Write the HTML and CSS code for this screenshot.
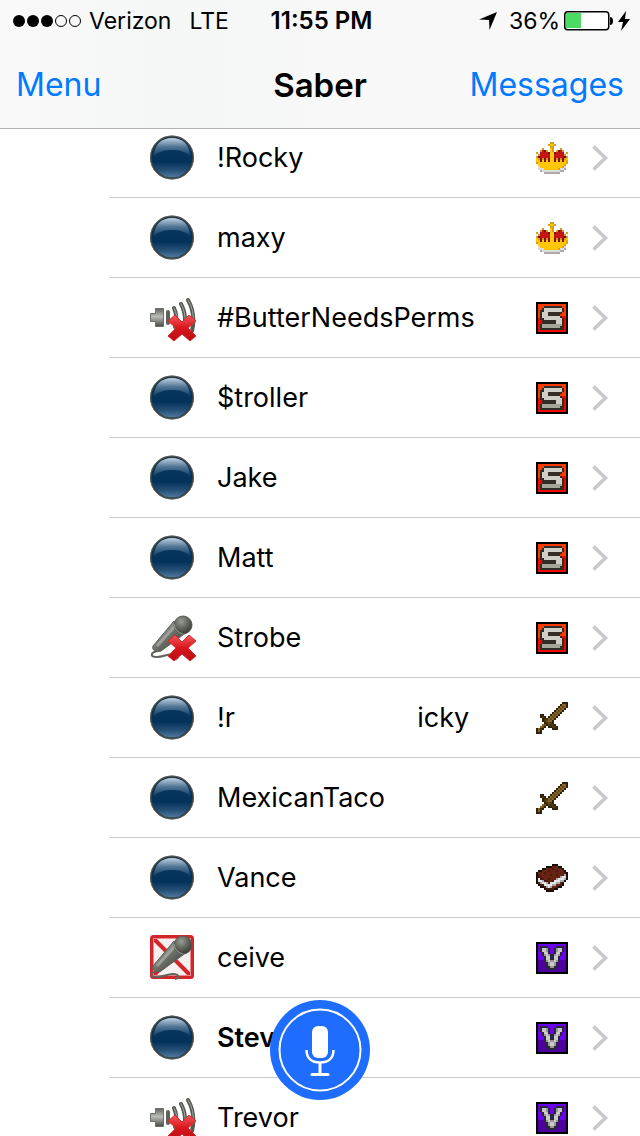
FILE: index.html
```html
<!DOCTYPE html>
<html lang="en">
<head>
  <meta charset="UTF-8">
  <meta name="viewport" content="width=device-width, initial-scale=1">
  <title>Saber</title>
  <link rel="stylesheet" href="styles.css">
</head>
<body>
  <svg class="defs" aria-hidden="true">
    <defs>
      <linearGradient id="orbFill" x1="0" y1="0" x2="0" y2="1">
        <stop offset="0" stop-color="#0b3a63"/>
        <stop offset="0.6" stop-color="#02315a"/>
        <stop offset="0.8" stop-color="#244f76"/>
        <stop offset="1" stop-color="#5580a6"/>
      </linearGradient>
      <linearGradient id="orbShine" x1="0" y1="0" x2="0" y2="1">
        <stop offset="0" stop-color="#c3d3e2"/>
        <stop offset="0.5" stop-color="#4f7394"/>
        <stop offset="1" stop-color="#123f68"/>
      </linearGradient>
      <linearGradient id="metal" x1="0" y1="0" x2="0" y2="1">
        <stop offset="0" stop-color="#60645f"/>
        <stop offset="0.45" stop-color="#b9bcb7"/>
        <stop offset="1" stop-color="#474b46"/>
      </linearGradient>
      <linearGradient id="crossFill" x1="0" y1="0" x2="0" y2="1">
        <stop offset="0" stop-color="#f25a5d"/>
        <stop offset="0.5" stop-color="#d9161c"/>
        <stop offset="1" stop-color="#b80d14"/>
      </linearGradient>
      <linearGradient id="micBody" x1="0" y1="0" x2="1" y2="1">
        <stop offset="0.2" stop-color="#a0a49d"/>
        <stop offset="0.5" stop-color="#6b6f67"/>
        <stop offset="0.8" stop-color="#40443d"/>
      </linearGradient>
      <radialGradient id="micHead" cx="0.4" cy="0.3" r="0.7">
        <stop offset="0" stop-color="#999d96"/>
        <stop offset="0.5" stop-color="#656961"/>
        <stop offset="1" stop-color="#3a3e37"/>
      </radialGradient>
    </defs>

    <symbol id="orb" viewBox="0 0 48 48">
      <circle cx="24" cy="23.500" r="21" fill="url(#orbFill)" stroke="#2f3836" stroke-width="2"/>
      <path d="M6 22C6 10 14 4 24 4s18 6 18 18c-5-5-11-6-18-6S11 17 6 22z" fill="url(#orbShine)"/>
      <circle cx="24" cy="23.500" r="21.500" fill="none" stroke="#777c72" stroke-width="1" opacity="0.6"/>
    </symbol>

    <symbol id="cross" viewBox="0 0 48 48">
      <path d="M27 21l7 7 7-7 7 6-8 7 8 8-6 5-8-7-8 7-6-5 8-8-8-7z" fill="url(#crossFill)" stroke="#d9292d" stroke-width="1" stroke-linejoin="round"/>
    </symbol>

    <symbol id="speaker" viewBox="0 0 48 48">
      <path d="M2.500 19.500h5v-5h8v18h-8v-5h-5z" fill="url(#metal)" stroke="#6b6f69"/>
      <path d="M20 18v11" fill="none" stroke="#5f635d" stroke-width="4" stroke-linecap="round"/>
      <path d="M26 14q4 8 1 19M33 10q6 11 3 24M40 6q8 14 4 31" fill="none" stroke="#555952" stroke-width="4" stroke-linecap="round"/>
      <path d="M26 14q4 7 2 15M33 10q5 9 4 18M40 6q7 11 5 24" fill="none" stroke="#a4a8a1" stroke-width="1" stroke-linecap="round"/>
    </symbol>

    <symbol id="mic" viewBox="0 0 48 48">
      <path d="M9 37c-7 2-7 6 0 6 6 0 10-3 16-3s7 4 2 5" fill="none" stroke="#5f635b" stroke-width="2"/>
      <path d="M5 32l21-25 13 11-26 19c-4 2-10-1-8-5z" fill="url(#micBody)" stroke="#5c6058" stroke-width="1"/>
      <path d="M9 32l18-20" stroke="#b6bab2" stroke-width="3" opacity="0.6"/>
      <circle cx="35" cy="11" r="9" fill="url(#micHead)" stroke="#575b53"/>
      <path d="M26 10q1 8 9 10" fill="none" stroke="#9da199" stroke-width="1"/>
    </symbol>

    <symbol id="micBlocked" viewBox="0 0 48 48">
      <rect x="3.500" y="2.500" width="41" height="41" rx="2" fill="#f4f0f0" stroke="#d3262b" stroke-width="3"/>
      <path d="M5 4l38 38M43 4L5 42" stroke="#d3262b" stroke-width="4"/>
      <rect x="5.500" y="4.500" width="37" height="37" fill="none" stroke="#e98a8c" stroke-width="1"/>
    </symbol>

    <symbol id="crown" viewBox="0 0 16 16"></symbol>
    <symbol id="staff" viewBox="0 0 16 16"></symbol>
    <symbol id="sword" viewBox="0 0 16 16"></symbol>
    <symbol id="book" viewBox="0 0 16 16"></symbol>
    <symbol id="vip" viewBox="0 0 16 16"></symbol>

    <symbol id="chevron" viewBox="0 0 16 26">
      <path d="M1.500 1.500L13.500 13 1.500 24.500" fill="none" stroke="#c7c7cc" stroke-width="3.500"/>
    </symbol>
  </svg>

  <header class="topbar">
    <div class="status">
      <div class="status-left">
        <svg class="signal" viewBox="0 0 68 12" aria-label="Signal 3 of 5">
          <circle cx="6" cy="6" r="6"/>
          <circle cx="20" cy="6" r="6"/>
          <circle cx="34" cy="6" r="6"/>
          <circle class="empty" cx="48" cy="6" r="5.500"/>
          <circle class="empty" cx="62" cy="6" r="5.500"/>
        </svg>
        <span>Verizon</span>
        <span class="network">LTE</span>
      </div>
      <div class="clock">11:55 PM</div>
      <div class="status-right">
        <svg class="location" viewBox="0 0 18 18"><path d="M18 0L10.500 18 10 8 0 7.500z"/></svg>
        <span>36%</span>
        <svg class="battery" viewBox="0 0 50 20">
          <rect x="0.750" y="0.750" width="44" height="18" rx="3" fill="#fff" stroke="#000" stroke-width="1.500"/>
          <rect x="2" y="2" width="15" height="15" fill="#4cd964"/>
          <path d="M46 6q3 0 3 4t-3 4z"/>
        </svg>
        <svg class="bolt" viewBox="0 0 12 20"><path d="M8 0L0 11h5L3 20l9-12H7z"/></svg>
      </div>
    </div>
    <nav class="navbar">
      <a href="#menu">Menu</a>
      <h1>Saber</h1>
      <a class="messages" href="#messages">Messages</a>
    </nav>
  </header>

  <main class="users">
    <a class="user" href="#rocky">
      <svg class="state"><use href="#orb"/></svg>
      <span class="name">!Rocky</span>
      <svg class="rank"><use href="#crown"/></svg>
      <svg class="chevron"><use href="#chevron"/></svg>
    </a>
    <a class="user" href="#maxy">
      <svg class="state"><use href="#orb"/></svg>
      <span class="name">maxy</span>
      <svg class="rank"><use href="#crown"/></svg>
      <svg class="chevron"><use href="#chevron"/></svg>
    </a>
    <a class="user" href="#butter">
      <svg class="state"><use href="#speaker"/><use href="#cross"/></svg>
      <span class="name">#ButterNeedsPerms</span>
      <svg class="rank"><use href="#staff"/></svg>
      <svg class="chevron"><use href="#chevron"/></svg>
    </a>
    <a class="user" href="#troller">
      <svg class="state"><use href="#orb"/></svg>
      <span class="name">$troller</span>
      <svg class="rank"><use href="#staff"/></svg>
      <svg class="chevron"><use href="#chevron"/></svg>
    </a>
    <a class="user" href="#jake">
      <svg class="state"><use href="#orb"/></svg>
      <span class="name">Jake</span>
      <svg class="rank"><use href="#staff"/></svg>
      <svg class="chevron"><use href="#chevron"/></svg>
    </a>
    <a class="user" href="#matt">
      <svg class="state"><use href="#orb"/></svg>
      <span class="name">Matt</span>
      <svg class="rank"><use href="#staff"/></svg>
      <svg class="chevron"><use href="#chevron"/></svg>
    </a>
    <a class="user" href="#strobe">
      <svg class="state"><use href="#mic"/><use href="#cross"/></svg>
      <span class="name">Strobe</span>
      <svg class="rank"><use href="#staff"/></svg>
      <svg class="chevron"><use href="#chevron"/></svg>
    </a>
    <a class="user" href="#ricky">
      <svg class="state"><use href="#orb"/></svg>
      <span class="name">!r                        icky</span>
      <svg class="rank"><use href="#sword"/></svg>
      <svg class="chevron"><use href="#chevron"/></svg>
    </a>
    <a class="user" href="#mexicantaco">
      <svg class="state"><use href="#orb"/></svg>
      <span class="name">MexicanTaco</span>
      <svg class="rank"><use href="#sword"/></svg>
      <svg class="chevron"><use href="#chevron"/></svg>
    </a>
    <a class="user" href="#vance">
      <svg class="state"><use href="#orb"/></svg>
      <span class="name">Vance</span>
      <svg class="rank"><use href="#book"/></svg>
      <svg class="chevron"><use href="#chevron"/></svg>
    </a>
    <a class="user" href="#ceive">
      <svg class="state"><use href="#micBlocked"/><use href="#mic"/></svg>
      <span class="name">ceive</span>
      <svg class="rank"><use href="#vip"/></svg>
      <svg class="chevron"><use href="#chevron"/></svg>
    </a>
    <a class="user me" href="#steve">
      <svg class="state"><use href="#orb"/></svg>
      <span class="name">Steve</span>
      <svg class="rank"><use href="#vip"/></svg>
      <svg class="chevron"><use href="#chevron"/></svg>
    </a>
    <a class="user" href="#trevor">
      <svg class="state"><use href="#speaker"/><use href="#cross"/></svg>
      <span class="name">Trevor</span>
      <svg class="rank"><use href="#vip"/></svg>
      <svg class="chevron"><use href="#chevron"/></svg>
    </a>
  </main>

  <button class="talk" type="button" aria-label="Talk">
    <svg viewBox="0 0 100 100">
      <circle cx="50" cy="50" r="40.500" fill="none" stroke="#fff" stroke-width="2"/>
      <rect x="42" y="26" width="16" height="32" rx="6" fill="#fff"/>
      <path d="M36.500 50c0 8 5 12.500 13.500 12.500s13.500-4.500 13.500-12.500" fill="none" stroke="#fff" stroke-width="2.500"/>
      <path d="M50 62v12" stroke="#fff" stroke-width="3"/>
      <path d="M42 74.500h16" stroke="#fff" stroke-width="3" stroke-linecap="round"/>
    </svg>
  </button>

  <script src="sprites.js"></script>
</body>
</html>
```

FILE: styles.css
```css
* {
  box-sizing: border-box;
}

body {
  margin: 0;
  height: 100vh;
  overflow: hidden;
  background: #fff;
  color: #000;
  font-family: Inter, "Liberation Sans", sans-serif;
}

a {
  color: #007aff;
  text-decoration: none;
}

.defs {
  position: absolute;
  width: 0;
  height: 0;
}

.topbar {
  position: fixed;
  top: 0;
  left: 0;
  right: 0;
  z-index: 10;
  background: linear-gradient(90deg, #f9f9f9, #f5f6f6 28%, #f8f8f8 55%);
  border-bottom: 1px solid #b2b2b2;
}

.status {
  display: grid;
  grid-template-columns: 1fr auto 1fr;
  align-items: center;
  height: 41px;
  padding: 0 10px 0 13px;
  font-size: 23px;
}

.status-left,
.status-right {
  display: flex;
  align-items: center;
}

.status-left {
  gap: 8px;
}

.status-right {
  justify-content: flex-end;
  gap: 4px;
}

.signal {
  width: 68px;
  height: 12px;
}

.signal .empty {
  fill: none;
  stroke: #000;
}

.network {
  margin-left: 10px;
}

.clock {
  font-size: 24px;
  font-weight: 600;
}

.location {
  width: 18px;
  height: 18px;
  margin-right: 8px;
}

.battery {
  width: 50px;
  height: 20px;
}

.bolt {
  width: 12px;
  height: 20px;
}

.navbar {
  display: grid;
  grid-template-columns: 1fr auto 1fr;
  align-items: center;
  height: 87px;
  padding: 0 16px;
  font-size: 32px;
}

.navbar h1 {
  margin: 0;
  font-size: 33px;
  font-weight: 600;
}

.messages {
  text-align: right;
}

/* user list */
.users {
  height: 100vh;
  overflow: hidden;
  padding: 118px 0 0 110px;
}

.user {
  display: flex;
  align-items: center;
  height: 80px;
  padding: 0 32px 0 38px;
  border-bottom: 1px solid #c8c7cc;
  color: #000;
  font-size: 27px;
}

.me {
  font-weight: 600;
}

.state {
  flex: none;
  width: 48px;
  height: 48px;
}

.name {
  flex: 1;
  min-width: 0;
  margin-left: 21px;
  overflow: hidden;
  white-space: pre;
}

.rank {
  flex: none;
  width: 32px;
  height: 32px;
  margin-right: 24px;
  shape-rendering: crispEdges;
}

.chevron {
  flex: none;
  width: 16px;
  height: 26px;
}

/* push to talk */
.talk {
  position: fixed;
  left: 50%;
  bottom: 36px;
  z-index: 20;
  width: 100px;
  height: 100px;
  padding: 0;
  border: none;
  border-radius: 50%;
  background: #1e6dff;
  transform: translateX(-50%);
  cursor: pointer;
}

.talk svg {
  display: block;
}
```

FILE: sprites.js
```javascript
// 16x16 rank sprites, one letter per pixel, "." is empty
const sprites = {
  crown: {
    colors: { g: "#d99a16", y: "#ffc60a", o: "#eda000", r: "#c3161c", d: "#820e12", w: "#dcdcdc", s: "#aaaaaa" },
    rows: [
      ".......gg.......",
      "......gyyg......",
      ".......gg.......",
      "...g...yg...g...",
      "..grdg.yg.gdrg..",
      "g.rrrrdyydrrrr.g",
      ".grrrrryyrrrrrg.",
      "gdrrrrryyrrrrrdg",
      "ygdgdgdyydgdgdgy",
      "yydydydyydydydyo",
      "gyyyyyyyyyyyyyyo",
      ".yyyyyyyyyyyyyo.",
      ".wyyyyyyyyyyyow.",
      ".wwwyyyyyyyowws.",
      "..swwwwwwwwwss..",
      "....ssssssss...."
    ]
  },
  staff: {
    colors: { k: "#000000", o: "#fa3a00", r: "#f50500", w: "#cfcfc5", s: "#a5a59a", d: "#322c27" },
    rows: [
      "kkkkkkkkkkkkkkkk",
      "kooooooooooooook",
      "kooodddddddddook",
      "koodwwwwwwwwwdok",
      "koddwwwwwwwwwdok",
      "kodwwwdddddddook",
      "kodwwwddddddoook",
      "kodwwwwwwwwwdrrk",
      "krddwwwwwwwwwdrk",
      "krrdddddddwwwdrk",
      "krrdddddddwwwdrk",
      "krdssssssssssdrk",
      "krdsssssssssddrk",
      "krddddddddddddrk",
      "krrrrrrrrrrrrrrk",
      "kkkkkkkkkkkkkkkk"
    ]
  },
  sword: {
    colors: { d: "#30220c", e: "#4a3511", b: "#856329", c: "#694d1d" },
    rows: [
      ".............ddd",
      "............dbbd",
      "...........dbcbd",
      "..........dbcbd.",
      ".........dbcbd..",
      "........dbcbd...",
      "..dd...dbcbd....",
      "..ded.dbcbd.....",
      "...deebcbd......",
      "...decbbd.......",
      "....deced.......",
      "...bcdeeed......",
      "..bcd.ddeed.....",
      "dbed....ddd.....",
      "dbd.............",
      "ddd............."
    ]
  },
  book: {
    colors: { k: "#180e0a", d: "#481a10", r: "#672414", w: "#e6e6e6", s: "#aaaaaa" },
    rows: [
      "................",
      "........kkk.....",
      ".....kkkrrrkk...",
      "...kkrrrdrrrrk..",
      ".kkrrrdrrrdrrrk.",
      "krrrdrrrrrrrrrdk",
      "kdrrrrrdrrdrrrsk",
      "kddrrrrrrrrrswwk",
      "kwddrrdrrrswwwsk",
      "kwwsddrrdwwwssk.",
      "kdswwsdwwwssrk..",
      ".kddwwwwssrrdk..",
      "..kkdswsrrdkk...",
      "....kddddkk.....",
      ".....kkkk.......",
      "................"
    ]
  },
  vip: {
    colors: { k: "#000000", p: "#6a00ef", q: "#4c009f", w: "#c9c9c9", s: "#999999", d: "#2b2635" },
    rows: [
      "kkkkkkkkkkkkkkkk",
      "kppppppppppppppk",
      "kpddddppppddddpk",
      "kpdwwsdppdswwdpk",
      "kpdwwsdppdswwdpk",
      "kppdwwdppdwwdppk",
      "kppdswsddswsdppk",
      "kpppdwwddwwdpppk",
      "kpppdwwddwwdpppk",
      "kqqqdswsswsdqqqk",
      "kqqqqdswwsdqqqqk",
      "kqqqqdswwsdqqqqk",
      "kqqqqddssddqqqqk",
      "kqqqqqddddqqqqqk",
      "kqqqqqqqqqqqqqqk",
      "kkkkkkkkkkkkkkkk"
    ]
  }
};

Object.keys(sprites).forEach(id => {
  const { colors, rows } = sprites[id];
  const symbol = document.getElementById(id);
  Object.keys(colors).forEach(key => {
    let d = "";
    rows.forEach((row, y) => {
      [...row].forEach((cell, x) => {
        if (cell === key) d += `M${x} ${y}h1v1h-1z`;
      });
    });
    const path = document.createElementNS("http://www.w3.org/2000/svg", "path");
    path.setAttribute("d", d);
    path.setAttribute("fill", colors[key]);
    symbol.appendChild(path);
  });
});
```
